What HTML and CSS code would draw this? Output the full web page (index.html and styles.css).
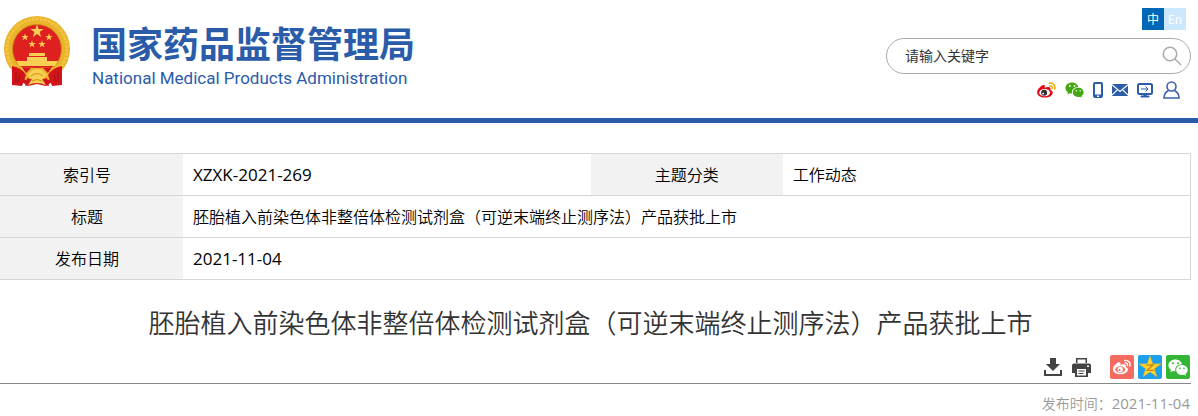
FILE: index.html
```html
<!DOCTYPE html>
<html lang="zh-CN">
  <head>
    <meta charset="UTF-8" />
    <meta name="viewport" content="width=device-width, initial-scale=1.0" />
    <title>国家药品监督管理局</title>
    <link rel="stylesheet" href="styles.css">
  </head>
  <body>
    <!-- shared shapes -->
    <svg class="defs" aria-hidden="true">
      <symbol id="star" viewBox="0 0 20 20">
        <path d="M10 0.5 12.3 7.3H19.5L13.7 11.5 15.9 18.4 10 14.2 4.1 18.4 6.3 11.5 0.5 7.3H7.7Z" />
      </symbol>
      <symbol id="wechat" viewBox="0 0 20 17">
        <path fill-rule="evenodd" d="M7.5 0.5C3.5 0.5 0.4 3 0.4 6.3c0 1.9 1 3.5 2.7 4.6l-.8 2.4 2.7-1.4c.8.2 1.5.3 2.4.3-.9-3.7 2-7 6.6-7C13.300 2.400 10.700.5 7.500.5ZM5 3.300a1 1 0 1 1 0 2 1 1 0 0 1 0-2Zm5 0a1 1 0 1 1 0 2 1 1 0 0 1 0-2Z" />
        <path fill-rule="evenodd" d="M14 6c-3.300 0-5.800 2.200-5.800 5s2.500 5 5.800 5c.7 0 1.300-.1 2-.3l2 1.100-.6-1.900c1.400-.9 2.300-2.300 2.300-3.900 0-2.800-2.500-5-5.700-5Zm-2 2.600a.8.8 0 1 1 0 1.600.8.8 0 0 1 0-1.600Zm4 0a.8.8 0 1 1 0 1.600.8.8 0 0 1 0-1.600Z" />
      </symbol>
      <symbol id="weibo-face" viewBox="0 0 20 17">
        <path d="M8 5C9.500 3.600 6.700 1.800 3.500 5 1 7.200 0 9.200 0 11c0 3.600 4 5.600 8.300 5.600 5 0 8.300-2.800 8.300-5.300 0-1.600-1.100-2.500-2.500-2.900.9-2.700-1-3.700-4.600-2.600-.7.200-1.500.2-1.500-.8Z" />
      </symbol>
      <symbol id="weibo-waves" viewBox="0 0 20 17">
        <path fill="none" stroke-width="1.600" stroke-linecap="round" d="M13 1.300c3.700-.8 6.900 2.500 5.700 6.200M13.500 4.100c1.800-.3 3 1 2.500 2.700" />
      </symbol>
    </svg>

    <header class="header">
      <a class="logo" href="#">
        <svg class="emblem" viewBox="0 0 68 72" aria-hidden="true">
          <path fill="#d3141a" d="M9 48 8 68l10-2 6 4 9-2 9 2 6-4 10 2-1-20Z" />
          <circle cx="33" cy="33" r="33" fill="#eab32c" />
          <circle cx="33" cy="33" r="30" fill="none" stroke="#f3c440" stroke-width="3" stroke-dasharray="3 1" />
          <circle cx="33" cy="33" r="24.500" fill="#df2020" stroke="#cf8a18" />
          <g fill="#f7cf52">
            <use href="#star" x="26" y="8" width="14" height="14" />
            <use href="#star" x="17" y="17" width="8" height="8" />
            <use href="#star" x="41" y="17" width="8" height="8" />
            <use href="#star" x="24" y="24" width="8" height="8" />
            <use href="#star" x="34" y="24" width="8" height="8" />
            <path d="M25 37h16v3H25ZM23 41h20v4H23ZM12 45h42l-3 5H15Z" />
          </g>
          <path fill="#eab32c" d="M12 50q21 4 42 0-8 14-21 14T12 50Z" />
          <path fill="#d3141a" d="M8 50q10 2 14 9l-4 11-10-1ZM58 50q-10 2-14 9l4 11 10-1ZM18 51l9 1-5 5ZM48 51l-9 1 5 5ZM23 62l10 3 10-3 2 8-12-3-12 3Z" />
          <path fill="#f7cf52" d="M27 55q6-4 12 0l4 4-5 4 4 6q-9-4-18 0l4-6-5-4Z" />
          <path fill="none" stroke="#d88f18" d="M27 60q6-5 12 0M28 65q5-3 10 0" />
          <path fill="none" stroke="#9f1014" d="M12 56v10M16 59l-2 7M54 56v10M50 59l2 7" />
        </svg>
        <span class="logo-text">
          <span class="logo-cn">国家药品监督管理局</span>
          <span class="logo-en">National Medical Products Administration</span>
        </span>
      </a>

      <div class="tools">
        <nav class="lang">
          <a class="active" href="#">中</a>
          <a href="#">En</a>
        </nav>
        <form class="search">
          <input type="text" value="请输入关键字" aria-label="请输入关键字" />
          <button type="button" aria-label="搜索">
            <svg width="20" height="20" viewBox="0 0 20 20" fill="none" stroke="#aaa" stroke-width="1.500">
              <circle cx="8" cy="8" r="6.700" />
              <path d="M13 13l6 6" />
            </svg>
          </button>
        </form>
        <div class="links">
          <a href="#" aria-label="微博">
            <svg width="19" height="16" viewBox="0 0 20 17">
              <use href="#weibo-face" fill="#e00b14" />
              <ellipse cx="8" cy="11.300" rx="5.700" ry="3.800" fill="#fff" />
              <circle cx="7.500" cy="11.500" r="3.200" fill="#333" />
              <circle cx="6.500" cy="12.300" r="1" fill="#fff" />
              <use href="#weibo-waves" stroke="#f0a800" />
            </svg>
          </a>
          <a href="#" aria-label="微信">
            <svg width="19" height="16" fill="#43a810"><use href="#wechat" /></svg>
          </a>
          <a href="#" aria-label="手机版">
            <svg width="10" height="16" viewBox="0 0 10 16">
              <rect width="10" height="16" rx="2" fill="#2a5caa" />
              <path fill="#fff" d="M2 2h6v10.500H2ZM4 13.500h2V15H4Z" />
            </svg>
          </a>
          <a href="#" aria-label="邮箱">
            <svg width="16" height="12" viewBox="0 0 16 12">
              <path fill="#2a5caa" d="M0 0h16v12H0Z" />
              <path fill="none" stroke="#fff" stroke-width="1.200" d="M0 .8 8 7.500 16 .8M0 11.200 5.500 5.700M16 11.200 10.500 5.700" />
            </svg>
          </a>
          <a href="#" aria-label="电脑版">
            <svg width="16" height="15" viewBox="0 0 16 15" fill="none" stroke="#2a5caa">
              <rect x="1" y="1" width="14" height="10" rx="1.500" stroke-width="2" />
              <path d="M4 6h7M8.500 3.500 11 6 8.500 8.500" />
              <path fill="#2a5caa" d="M7 11h2v2h3v1H4v-1h3Z" />
            </svg>
          </a>
          <a class="user" href="#" aria-label="登录">
            <svg width="17" height="18" viewBox="0 0 17 18" fill="none" stroke="#3f5fae" stroke-width="1.600">
              <circle cx="8.500" cy="5.500" r="4.500" />
              <path d="M5.500 9.500C2.500 11 1 13.500 1 17h15c0-3.500-1.500-6-4.500-7.500" />
            </svg>
          </a>
        </div>
      </div>
    </header>

    <main class="content">
      <table class="info">
        <colgroup>
          <col class="col-first" />
          <col />
          <col class="col-label" />
          <col />
        </colgroup>
        <tr>
          <th scope="row">索引号</th>
          <td class="num">XZXK-2021-269</td>
          <th scope="row" class="mid">主题分类</th>
          <td>工作动态</td>
        </tr>
        <tr>
          <th scope="row">标题</th>
          <td colspan="3">胚胎植入前染色体非整倍体检测试剂盒（可逆末端终止测序法）产品获批上市</td>
        </tr>
        <tr>
          <th scope="row">发布日期</th>
          <td colspan="3" class="num">2021-11-04</td>
        </tr>
      </table>

      <h1>胚胎植入前染色体非整倍体检测试剂盒（可逆末端终止测序法）产品获批上市</h1>

      <div class="actions">
        <button type="button" aria-label="下载">
          <svg width="18" height="18" viewBox="0 0 18 18" fill="#444">
            <path d="M6 0h6v6h4l-7 7-7-7h4Z" />
            <path d="M0 12h2v4h14v-4h2v6H0Z" />
          </svg>
        </button>
        <button type="button" aria-label="打印">
          <svg width="19" height="19" viewBox="0 0 19 19">
            <path fill="#444" d="M4 0h11v5H4ZM2 5.500h15q2 0 2 2V15h-3v4H3v-4H0V7.500q0-2 2-2Z" />
            <path fill="#fff" d="M5.500 1.500h8V5h-8ZM5 11h9v6.500H5ZM15 7.500h2V9h-2Z" />
            <path fill="#444" d="M6.500 12.500h6v1h-6ZM6.500 15h5v1h-5Z" />
          </svg>
        </button>
        <div class="share">
          <a class="share-weibo" href="#" aria-label="分享到微博">
            <svg width="18" height="16" viewBox="0 0 20 17">
              <use href="#weibo-face" fill="#fff" />
              <ellipse cx="8" cy="11.300" rx="5.500" ry="3.600" fill="#f56b5f" />
              <circle cx="8" cy="11.300" r="3" fill="#fff" />
              <circle cx="7.300" cy="11.800" r="1.200" fill="#f56b5f" />
              <use href="#weibo-waves" stroke="#fff" />
            </svg>
          </a>
          <a class="share-qzone" href="#" aria-label="分享到QQ空间">
            <svg width="24" height="24" viewBox="0 0 20 19">
              <use href="#star" width="20" height="19" fill="#ffd633" stroke="#f3b81c" stroke-width="0.600" />
              <path fill="none" stroke="#c98a10" stroke-width="1.200" d="M7 7.800h5.500l-5 4.500h6" />
            </svg>
          </a>
          <a class="share-wechat" href="#" aria-label="分享到微信">
            <svg width="20" height="17" fill="#fff"><use href="#wechat" /></svg>
          </a>
        </div>
      </div>

      <p class="date">发布时间：<span class="num">2021-11-04</span></p>
    </main>
  </body>
</html>
```

FILE: styles.css
```css
* {
  box-sizing: border-box;
}
body {
  margin: 0;
  background-color: #fff;
  color: #000;
  font-family: "Noto Sans CJK SC", sans-serif;
  font-size: 16px;
  font-weight: 350;
}
a {
  color: inherit;
  text-decoration: none;
}
svg {
  display: block;
}
button {
  padding: 0;
  border: none;
  background: none;
  cursor: pointer;
}
.defs {
  display: none;
}
.num {
  font-family: "Open Sans", "Noto Sans", sans-serif;
  font-size: 17px;
  font-weight: 400;
}

/* header */
.header {
  display: flex;
  justify-content: space-between;
  align-items: flex-start;
  height: 123px;
  padding: 8px 7px 0 4px;
  border-bottom: 5px solid #2a5caa;
}
.logo {
  display: flex;
  gap: 19px;
  padding-top: 8px;
  color: #2a5caa;
}
.emblem {
  width: 68px;
  height: 72px;
}
.logo-text {
  display: flex;
  flex-direction: column;
}
.logo-cn {
  font-size: 36px;
  font-weight: bold;
  line-height: 52px;
}
.logo-en {
  padding-left: 1px;
  font-family: Roboto, sans-serif;
  font-size: 17px;
  font-weight: 400;
  line-height: 20px;
}
.tools {
  display: flex;
  flex-direction: column;
  align-items: flex-end;
  width: 305px;
}
.lang {
  display: flex;
  margin-right: 5px;
}
.lang a {
  width: 22px;
  height: 22px;
  background-color: #cce8ff;
  color: #fff;
  font-size: 12px;
  font-weight: 400;
  line-height: 22px;
  text-align: center;
}
.lang .active {
  background-color: #0068b7;
}
.search {
  display: flex;
  align-items: center;
  width: 100%;
  height: 36px;
  margin-top: 8px;
  padding: 0 8px 0 18px;
  border: 1px solid #aaa;
  border-radius: 18px;
}
.search input {
  flex: 1;
  min-width: 0;
  padding: 0 0 2px;
  border: none;
  outline: none;
  background: none;
  color: #333;
  font-family: inherit;
  font-size: 14px;
}
.links {
  display: flex;
  align-items: center;
  gap: 9px;
  height: 18px;
  margin: 7px 11px 0 0;
}
.links .user {
  margin-left: 1px;
}

/* article */
.content {
  margin-right: 7px;
}
.info {
  width: 100%;
  margin-top: 30px;
  border-collapse: collapse;
  table-layout: fixed;
  border-right: 1px solid #d6d6d6;
}
.col-first {
  width: 183px;
}
.col-label {
  width: 192px;
}
.info th,
.info td {
  height: 42px;
  padding: 0 10px 2px;
  border-top: 1px solid #d6d6d6;
  border-bottom: 1px solid #d6d6d6;
  line-height: 24px;
}
.info th {
  padding: 0 9px 2px 0;
  background-color: #f2f2f2;
  font-weight: inherit;
}
.info .mid {
  padding: 0 0 2px;
}
.info td {
  text-align: left;
}
.info .num {
  padding-bottom: 0;
}
h1 {
  margin: 22px 10px 0 0;
  color: #333;
  font-size: 26px;
  font-weight: inherit;
  line-height: 40px;
  text-align: center;
}
.actions {
  display: flex;
  justify-content: flex-end;
  align-items: center;
  gap: 10px;
  padding: 13px 1px 4px 0;
  border-bottom: 1px solid #888;
}
.share {
  display: flex;
  gap: 4px;
  margin-left: 9px;
}
.share a {
  display: flex;
  justify-content: center;
  align-items: center;
  width: 24px;
  height: 24px;
  border-radius: 2px;
}
.share-weibo {
  background-color: #f56b5f;
}
.share-qzone {
  background-color: #1e9fee;
}
.share-wechat {
  background-color: #35b535;
}
.date {
  margin: 8px 0 0;
  padding-right: 1px;
  color: #999;
  font-size: 14px;
  line-height: 22px;
  text-align: right;
}
.date .num {
  font-size: 15px;
}
```
